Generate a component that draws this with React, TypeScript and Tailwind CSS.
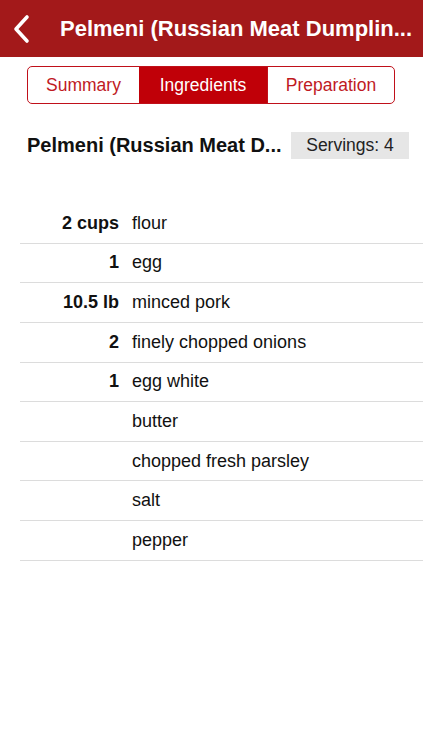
import React from "react";

const rows: [string, string][] = [
  ["2 cups", "flour"],
  ["1", "egg"],
  ["10.5 lb", "minced pork"],
  ["2", "finely chopped onions"],
  ["1", "egg white"],
  ["", "butter"],
  ["", "chopped fresh parsley"],
  ["", "salt"],
  ["", "pepper"],
];

export default function App() {
  return (
    <div
      className="w-[423px] h-[750px] bg-white overflow-hidden"
      style={{ fontFamily: '"Liberation Sans", Arial, sans-serif' }}
    >
      <div className="h-[57px] bg-[#a3191a] flex items-center">
        <div className="w-[60px] flex items-center pl-[12px]">
          <svg width="18" height="30" viewBox="0 0 18 30">
            <path d="M15 3 L4 15 L15 27" fill="none" stroke="white" strokeWidth="3.6" strokeLinecap="round" strokeLinejoin="round" />
          </svg>
        </div>
        <div className="text-white text-[22px] font-bold whitespace-nowrap overflow-hidden">
          Pelmeni (Russian Meat Dumplin...
        </div>
      </div>

      <div className="mt-[9px] ml-[27px] w-[368px] h-[38px] flex border border-[#c0101a] rounded-[5px] overflow-hidden text-[17.5px]">
        <div className="w-[111px] flex items-center justify-center text-[#bf1a1f]">Summary</div>
        <div className="w-[128px] flex items-center justify-center bg-[#c00008] text-white">Ingredients</div>
        <div className="flex-1 flex items-center justify-center text-[#bf1a1f] border-l border-[#c0101a]">Preparation</div>
      </div>

      <div className="mt-[27px] flex items-center justify-between pl-[27px] pr-[14px] h-[28px]">
        <div className="text-[20px] font-bold text-[#111] whitespace-nowrap">Pelmeni (Russian Meat D...</div>
        <div className="w-[118px] h-[27px] bg-[#e6e6e6] flex items-center justify-center text-[17.5px] text-[#222]">
          Servings: 4
        </div>
      </div>

      <div className="mt-[45px] ml-[20px]">
        {rows.map(([amt, name], i) => (
          <div key={i} className="h-[39.625px] flex items-center border-b border-[#dcdcdc] text-[18px] text-[#111]">
            <div className="w-[99px] text-right font-bold">{amt}</div>
            <div className="ml-[13px]">{name}</div>
          </div>
        ))}
      </div>
    </div>
  );
}
